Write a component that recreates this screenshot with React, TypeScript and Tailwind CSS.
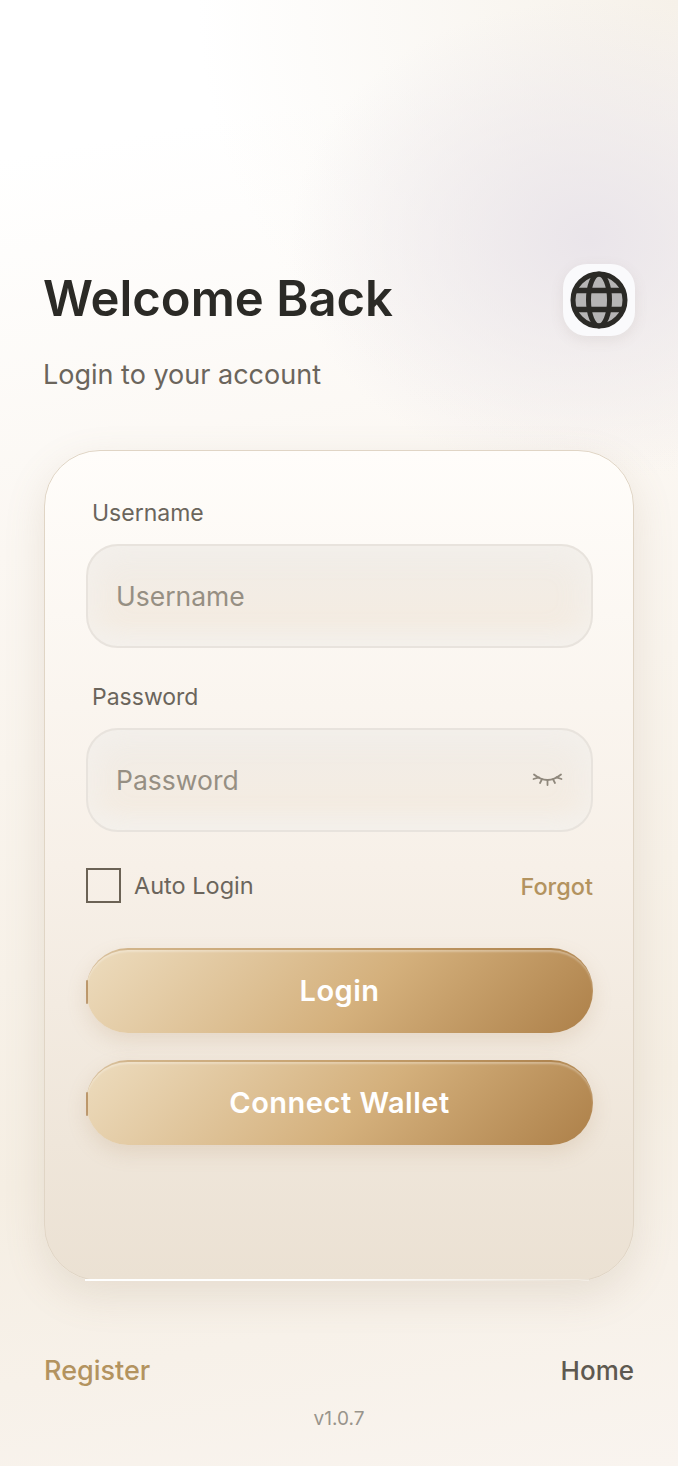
import React from 'react';

function GlobeIcon() {
  return (
    <svg width="60" height="60" viewBox="0 0 60 60" fill="none">
      <circle cx="30" cy="30" r="26" fill="#b6b5b5" stroke="#2b2a26" strokeWidth="5" />
      <ellipse cx="30" cy="30" rx="10.500" ry="26" stroke="#2b2a26" strokeWidth="5" />
      <path d="M6 20.500h48M6 39.500h48" stroke="#2b2a26" strokeWidth="5.500" />
    </svg>
  );
}

function ClosedEyeIcon() {
  return (
    <svg width="32" height="18" viewBox="0 0 32 18" fill="none" stroke="#8f887c" strokeWidth="1.800" strokeLinecap="round">
      <path d="M3 3.500Q16.500 14.500 30 3.500" />
      <path d="M8 6.300L2.500 8M11 8.300L9 12M16.500 9V14M22 8.300L24 12M25.500 6.300L30.500 8" />
    </svg>
  );
}

function Field({ label, placeholder, icon }: { label: string; placeholder: string; icon?: React.ReactNode }) {
  return (
    <div>
      <label className="block h-[32px] pl-[6px] text-[23px] leading-[34px] text-[#6b655c]">{label}</label>
      <div className="mt-4 flex h-[104px] items-center justify-between rounded-[32px] border-2 border-[#e8e3dd] bg-[linear-gradient(180deg,#f1ede8_0%,#f4ece2_75%,#f3efe9_100%)] px-[28px] shadow-[inset_0_0_30px_6px_rgba(244,241,236,0.9)]">
        <span className="pt-[2px] text-[26.500px] text-[#968f83]">{placeholder}</span>
        {icon}
      </div>
    </div>
  );
}

function GoldButton({ children }: { children: React.ReactNode }) {
  return (
    <button className="relative flex h-[85px] w-full items-center justify-center rounded-[42px] border-t-2 border-t-[rgba(170,130,80,0.3)] bg-[linear-gradient(135deg,#eddcbe_0%,#d4b07c_55%,#ad8049_100%)] pb-[2px] text-[29px] font-semibold tracking-[0.5px] text-white shadow-[0_8px_20px_rgba(170,135,90,0.18),inset_0_2px_2px_rgba(255,255,255,0.3)]">
      <span className="absolute top-1/2 left-0 h-[24px] w-[2px] -translate-y-1/2 rounded-full bg-[#a87c48] opacity-70" />
      {children}
    </button>
  );
}

export default function App() {
  return (
    <div className="flex min-h-[1466px] flex-col bg-[radial-gradient(ellipse_300px_240px_at_590px_240px,#eae5ea_0%,rgba(234,229,234,0.5)_50%,rgba(234,229,234,0)_100%),radial-gradient(circle_at_678px_0px,#f6f1e9_0%,rgba(246,241,233,0)_480px),linear-gradient(170deg,#ffffff_10%,#fbf7f2_35%,#f5eee3_75%,#f9f4ef_100%)] px-[44px] pt-[264px] font-['Inter',sans-serif]">
      <div className="flex h-[72px] items-center justify-between">
        <h1 className="-ml-px pb-[2px] text-[49px] font-semibold text-[#2b2a26]">Welcome Back</h1>
        <div className="-mr-[1px] flex h-[72px] w-[72px] items-center justify-center rounded-[24px] bg-[#fafafc] shadow-[0_4px_14px_rgba(120,100,90,0.1)]">
          <GlobeIcon />
        </div>
      </div>
      <p className="mt-[21px] -ml-px text-[27px] leading-[36px] text-[#6b655c]">Login to your account</p>

      <div className="relative mt-[57px] h-[831px] rounded-[56px] border border-[#e0d5c5] bg-[linear-gradient(180deg,#fffdfa_0%,#f7f0e8_50%,#ebe1d3_100%)] pt-[45px] pr-[40px] pl-[41px] shadow-[0_14px_40px_rgba(150,125,95,0.16)]">
        <Field label="Username" placeholder="Username" />
        <div className="mt-[32px]">
          <Field label="Password" placeholder="Password" icon={<ClosedEyeIcon />} />
        </div>
        <div className="mt-[36px] flex h-[35px] items-center justify-between">
          <div className="flex items-center gap-[13px]">
            <div className="h-[35px] w-[35px] border-2 border-[#6b6255]" />
            <span className="text-[23.500px] text-[#6b655c]">Auto Login</span>
          </div>
          <span className="pt-[2px] text-[23.500px] font-medium text-[#b3935f]">Forgot</span>
        </div>
        <div className="mt-[45px] flex flex-col gap-[27px]">
          <GoldButton>Login</GoldButton>
          <GoldButton>Connect Wallet</GoldButton>
        </div>
        <div className="absolute right-[44px] -bottom-px left-[40px] h-[2px] bg-[linear-gradient(90deg,#ffffff_0%,#ffffff_45%,rgba(255,255,255,0.3)_100%)]" />
      </div>

      <div className="mt-[70px] flex items-center justify-between font-medium">
        <span className="text-[27px] text-[#b3935f]">Register</span>
        <span className="pb-[2px] text-[26px] text-[#5e5950]">Home</span>
      </div>
      <p className="mt-[13px] text-center text-[19px] text-[#99948b]">v1.0.7</p>
    </div>
  );
}
